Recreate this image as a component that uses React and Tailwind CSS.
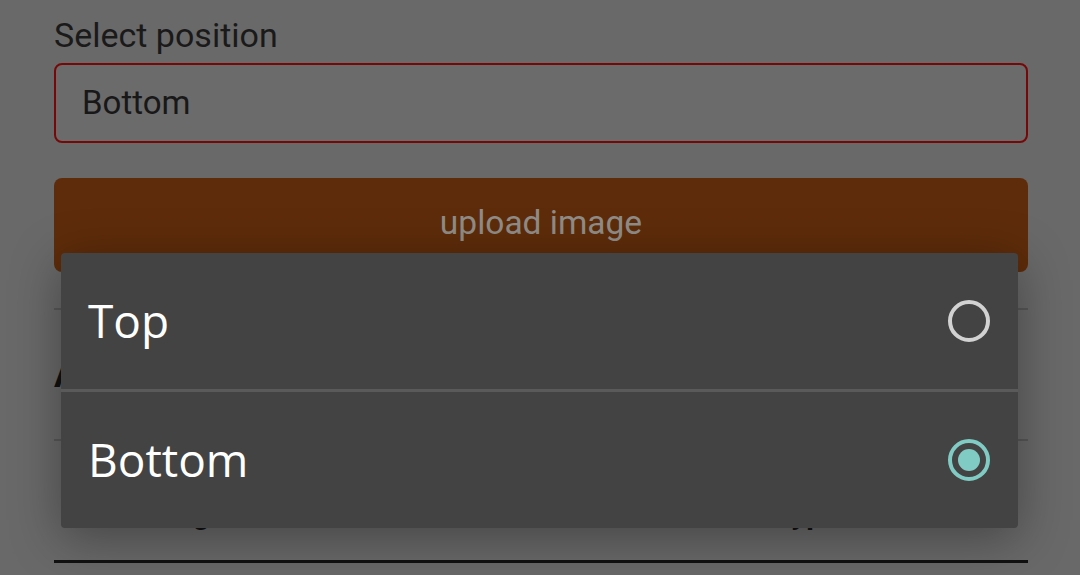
import React from 'react';

const options = [
    { label: 'Top', checked: false },
    { label: 'Bottom', checked: true },
];

const Radio = ({ checked }) => (
    <svg width="44" height="44" viewBox="0 0 44 44">
        <circle cx="22" cy="22" r="19" fill="none" stroke={checked ? '#80cbc4' : '#d2d2d2'} strokeWidth="4" />
        {checked && <circle cx="22" cy="22" r="11" fill="#80cbc4" />}
    </svg>
);

const App = () => {
    return (
        <div className="relative w-full h-[575px] overflow-hidden bg-[#696969] font-['Roboto',sans-serif]">
            {/* Form behind the dim layer */}
            <div className="flex flex-col px-[54px] pt-[15px] w-[1082px]">
                <label className="text-[34px] leading-[40px] text-[#1a1a1a]">Select position</label>
                <div className="mt-[8px] h-[80px] flex items-center px-[26px] border-2 border-[#780808] rounded-[8px] bg-[#6b6b6b]">
                    <span className="text-[33px] text-[#181818]">Bottom</span>
                </div>
                <button className="mt-[35px] h-[94px] rounded-[8px] bg-[#5e2c0a] text-[33.5px] text-[#908c88] pb-[3px]">
                    upload image
                </button>
                <div className="mt-[36px] h-[2px] bg-[#575757]"></div>
                <div className="h-[129px] flex items-center">
                    <h2 className="text-[36px] font-bold text-[#111]">Advanced options</h2>
                </div>
                <div className="h-[2px] bg-[#575757]"></div>
                <div className="grid grid-cols-2 h-[119px] items-end pb-[26px]">
                    <span className="pl-[88px] text-[30px] leading-[40px] font-bold text-[#111]">Image</span>
                    <span className="text-center pl-[44px] text-[30px] leading-[40px] font-bold text-[#111]">Type</span>
                </div>
                <div className="h-[3px] bg-[#111]"></div>
            </div>

            {/* Position picker dialog */}
            <div className="absolute left-[61px] top-[253px] w-[957px] bg-[#434343] rounded-[4px] shadow-[0_10px_50px_rgba(0,0,0,0.35)] flex flex-col">
                {options.map((opt, i) => (
                    <React.Fragment key={opt.label}>
                        {i > 0 && <div className="h-[3px] bg-[#5a5a5a]"></div>}
                        <div className="h-[136px] flex items-center justify-between pl-[27px] pr-[27px]">
                            <span className="text-[46px] text-white font-['Open_Sans',sans-serif] pb-[2px]">{opt.label}</span>
                            <Radio checked={opt.checked} />
                        </div>
                    </React.Fragment>
                ))}
            </div>
        </div>
    );
};

export default App;
